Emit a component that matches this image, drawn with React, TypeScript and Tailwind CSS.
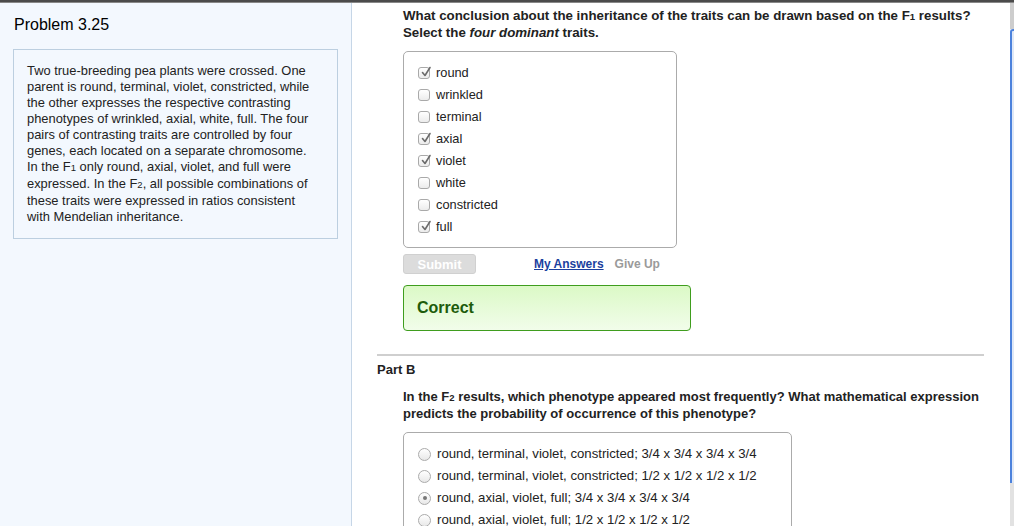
import React from "react";

const font = { fontFamily: '"Liberation Sans", Arial, sans-serif' };

function Check({ on }: { on?: boolean }) {
  return (
    <span className="relative inline-block w-[12px] h-[12px] rounded-[3px] border border-[#a9a9a9] bg-gradient-to-b from-white to-[#ececec] shrink-0">
      {on && (
        <svg viewBox="0 0 12 12" className="absolute left-[1px] top-[-2px] w-[12px] h-[12px]">
          <path d="M2.5 6.5 L5 9.5 L10 1.5" fill="none" stroke="#6b6b6b" strokeWidth="1.6" strokeLinecap="round" strokeLinejoin="round" />
        </svg>
      )}
    </span>
  );
}

function Radio({ on }: { on?: boolean }) {
  return (
    <span className="relative inline-flex items-center justify-center w-[13px] h-[13px] rounded-full border border-[#ababab] bg-gradient-to-b from-white to-[#e8e8e8] shrink-0">
      {on && <span className="w-[4px] h-[4px] rounded-full bg-[#777]" />}
    </span>
  );
}

const traits: [string, boolean][] = [
  ["round", true],
  ["wrinkled", false],
  ["terminal", false],
  ["axial", true],
  ["violet", true],
  ["white", false],
  ["constricted", false],
  ["full", true],
];

const options: [string, boolean][] = [
  ["round, terminal, violet, constricted; 3/4 x 3/4 x 3/4 x 3/4", false],
  ["round, terminal, violet, constricted; 1/2 x 1/2 x 1/2 x 1/2", false],
  ["round, axial, violet, full; 3/4 x 3/4 x 3/4 x 3/4", true],
  ["round, axial, violet, full; 1/2 x 1/2 x 1/2 x 1/2", false],
];

export default function App() {
  return (
    <div className="w-[1014px] h-[526px] overflow-hidden flex flex-col bg-white text-[#222]" style={font}>
      <div className="h-[3px] shrink-0 bg-[#4b4b4b] border-b border-[#888]" />
      <div className="flex flex-1 min-h-0">
        {/* sidebar */}
        <div className="w-[352px] shrink-0 bg-[#f3f8fe] border-r border-[#c6d6e7] pt-[12px]">
          <h1 className="pl-[14px] text-[16px] leading-[20px] text-black">Problem 3.25</h1>
          <div className="ml-[13px] mt-[14px] w-[325px] border border-[#bccfe0] px-[13px] pt-[13px] pb-[13px] text-[12.9px] leading-[16px] whitespace-nowrap">
            Two true-breeding pea plants were crossed. One<br />
            parent is round, terminal, violet, constricted, while<br />
            the other expresses the respective contrasting<br />
            phenotypes of wrinkled, axial, white, full. The four<br />
            pairs of contrasting traits are controlled by four<br />
            genes, each located on a separate chromosome.<br />
            In the F<span className="text-[9.5px]">1</span> only round, axial, violet, and full were<br />
            expressed. In the F<span className="text-[9.5px]">2</span>, all possible combinations of<br />
            these traits were expressed in ratios consistent<br />
            with Mendelian inheritance.
          </div>
        </div>

        {/* main */}
        <div className="flex-1 min-w-0 pl-[25px] pr-[26px] pt-[5px]">
          <div className="pl-[26px]">
            <p className="font-bold text-[13.3px] leading-[16px] whitespace-nowrap">
              What conclusion about the inheritance of the traits can be drawn based on the F<span className="text-[9.5px]">1</span> results?
              <br />
              Select the <i>four dominant</i> traits.
            </p>
            <div className="mt-[10px] w-[274px] rounded-[5px] border border-[#ababab] pl-[14px] pt-[10px] pb-[9px]">
              {traits.map(([t, on]) => (
                <div key={t} className="flex items-center h-[22px] gap-[6px] text-[12.8px]">
                  <Check on={on} />
                  <span>{t}</span>
                </div>
              ))}
            </div>
            <div className="mt-[6px] flex items-center">
              <button className="w-[73px] h-[20px] rounded-[3px] bg-[#dcdcdc] border border-[#d0d0d0] text-white font-bold text-[13px]">
                Submit
              </button>
              <a className="ml-[58px] text-[12px] font-bold text-[#1b3f9e] underline">My Answers</a>
              <span className="ml-[11px] text-[12px] font-bold text-[#9a9a9a]">Give Up</span>
            </div>
            <div className="mt-[11px] w-[288px] h-[46px] rounded-[4px] border border-[#3f9d1e] bg-gradient-to-b from-[#dbf9c6] to-[#f1fdea] flex items-center pl-[13px]">
              <span className="text-[16px] font-bold text-[#1d5c0b]">Correct</span>
            </div>
          </div>

          <div className="mt-[23px] h-[2px] bg-[#cfcfcf]" />
          <h2 className="pt-[6px] text-[13px] leading-[16px] font-bold">Part B</h2>

          <div className="pl-[26px]">
            <p className="mt-[11px] font-bold text-[13px] leading-[16px] whitespace-nowrap">
              In the F<span className="text-[9.5px]">2</span> results, which phenotype appeared most frequently? What mathematical expression
              <br />
              predicts the probability of occurrence of this phenotype?
            </p>
            <div className="mt-[10px] w-[389px] rounded-t-[5px] border border-[#ababab] pl-[14px] pt-[10px] pb-[9px]">
              {options.map(([t, on]) => (
                <div key={t} className="flex items-center h-[22px] gap-[6px] text-[13.2px]">
                  <Radio on={on} />
                  <span>{t}</span>
                </div>
              ))}
            </div>
          </div>
        </div>

        {/* window edge */}
        <div className="w-[4px] shrink-0 flex flex-col">
          <div className="h-[26px] bg-[#cdcdcd]" />
          <div className="h-[454px] rounded-tl-[3px] border-l-2 border-t-2 border-[#4c82dc] bg-[#dfe8f6]" />
          <div className="flex-1 bg-[#e2e2e2]" />
        </div>
      </div>
    </div>
  );
}
